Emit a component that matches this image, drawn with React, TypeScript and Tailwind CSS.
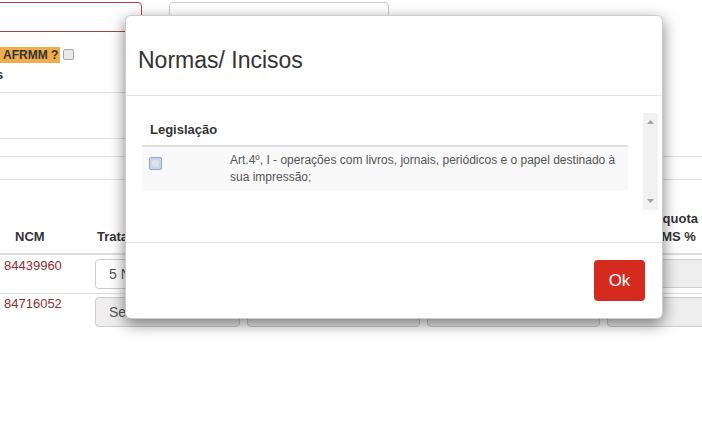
// Página de itens com o modal "Normas/ Incisos" aberto por cima
const CheckboxAzul = () => (
    <div className="h-[13px] w-[13px] rounded-[2px] border border-[#8ea6dc] bg-[#c9d5ee] p-[2px]">
        <div className="h-full w-full rounded-[3px] bg-[#e2e2e2]" />
    </div>
);

const Background = () => (
    <div className="w-[760px]">
        {/* campos do topo */}
        <div className="flex pt-[2px]">
            <div className="ml-[-20px] h-[30px] w-[162px] rounded-[4px] border border-[#a94442] bg-white" />
            <div className="ml-[27px] h-[30px] w-[220px] rounded-[4px] border border-[#ccc] bg-white" />
        </div>
        <div className="mt-[14px] flex h-[17px] items-center">
            <span className="bg-[#f0ad4e] pl-[3px] pr-[2px] text-[12px] font-bold leading-[16px] text-[#333]">AFRMM ?</span>
            <span className="ml-[3px] h-[11px] w-[11px] rounded-[2px] border border-[#a6a6a6] bg-[#e9e9e9]" />
        </div>
        <div className="mt-[3px] h-[17px] leading-[17px] font-bold">
            <span className="ml-[-4px]">s</span>
        </div>
        <div className="h-[10px] w-[560px] border-b border-[#ddd]" />
        <div className="h-[46px] w-[560px] border-b border-[#ddd]" />
        <div className="h-[18px] border-b border-[#ddd]" />
        <div className="h-[23px] border-b border-[#ddd]" />

        {/* tabela de itens */}
        <div className="flex h-[75px] items-end border-b-2 border-[#ddd] pb-[7px] font-bold leading-[18px]">
            <div className="w-[95px] pl-[15px]">NCM</div>
            <div className="w-[152px] pl-[2px]">Tratamento</div>
            <div className="w-[180px]" />
            <div className="w-[180px]" />
            <div className="w-[130px] text-center">
                <div>Alíquota</div>
                <div>ICMS %</div>
            </div>
        </div>
        <div className="flex h-[39px] border-b border-[#ddd]">
            <div className="w-[95px] pl-[4px] pt-[2px] leading-[18px] text-[#8a2f2f]">84439960</div>
            <div className="w-[152px] pt-[4px]">
                <div className="h-[30px] w-[145px] rounded-[4px] border border-[#ccc] bg-white pl-[13px] text-[14px] leading-[28px] text-[#555]">5 Normas</div>
            </div>
            <div className="w-[180px] pt-[4px]">
                <div className="h-[30px] w-[173px] rounded-[4px] border border-[#ccc] bg-white" />
            </div>
            <div className="w-[180px] pt-[4px]">
                <div className="h-[30px] w-[173px] rounded-[4px] border border-[#ccc] bg-white" />
            </div>
            <div className="pt-[4px]">
                <div className="h-[29px] w-[140px] rounded-[4px] border border-[#ccc] bg-[#eee]" />
            </div>
        </div>
        <div className="flex h-[40px]">
            <div className="w-[95px] pl-[4px] pt-[1px] leading-[18px] text-[#8a2f2f]">84716052</div>
            <div className="w-[152px] pt-[3px]">
                <div className="h-[30px] w-[145px] rounded-[4px] border border-[#ccc] bg-[#eee] pl-[13px] text-[14px] leading-[28px] text-[#555]">
                    Selecione
                </div>
            </div>
            <div className="w-[180px] pt-[3px]">
                <div className="h-[30px] w-[173px] rounded-[4px] border border-[#ccc] bg-[#eee]" />
            </div>
            <div className="w-[180px] pt-[3px]">
                <div className="h-[30px] w-[173px] rounded-[4px] border border-[#ccc] bg-[#eee]" />
            </div>
            <div className="pt-[3px]">
                <div className="h-[30px] w-[140px] rounded-[4px] border border-[#ccc] bg-[#eee]" />
            </div>
        </div>
    </div>
);

const NormasModal = () => (
    <div className="absolute left-[125px] top-[15px] flex h-[304px] w-[538px] flex-col rounded-[6px] border border-[rgba(0,0,0,0.2)] bg-white shadow-[0_5px_15px_rgba(0,0,0,0.5)]">
        <div className="h-[80px] border-b border-[#e5e5e5] pl-[12px] pt-[31px]">
            <h4 className="text-[23px] leading-[26px] text-[#333]">Normas/ Incisos</h4>
        </div>

        <div className="h-[146px] pl-[16px] pt-[17px]">
            <div className="flex h-[97px] w-[516px]">
                <div className="w-[486px]">
                    <div className="h-[34px] border-b-2 border-[#ddd] pl-[8px] pt-[8px] font-bold leading-[18px] text-[#333]">
                        Legislação
                    </div>
                    <div className="flex bg-[#f9f9f9] py-[5px]">
                        <div className="w-[83px] pl-[7px] pt-[5px]">
                            <CheckboxAzul />
                        </div>
                        <div className="flex-1 pl-[5px] pr-[6px] text-[12px] leading-[17px] text-[#555]">
                            Art.4º, I - operações com livros, jornais, periódicos e o papel destinado à sua impressão;
                        </div>
                    </div>
                </div>
                {/* barra de rolagem */}
                <div className="ml-auto flex w-[15px] flex-col items-center justify-between bg-[#f1f1f1] py-[7px]">
                    <svg width="7" height="4" viewBox="0 0 7 4">
                        <path d="M0 4 L3.5 0 L7 4 Z" fill="#a3a3a3" />
                    </svg>
                    <svg width="7" height="4" viewBox="0 0 7 4">
                        <path d="M0 0 L3.5 4 L7 0 Z" fill="#a3a3a3" />
                    </svg>
                </div>
            </div>
        </div>

        <div className="flex flex-1 justify-end border-t border-[#e5e5e5] pr-[17px] pt-[17px]">
            <button className="h-[41px] w-[51px] rounded-[4px] bg-[#d52a1e] text-[17px] text-white">Ok</button>
        </div>
    </div>
);

export default function App() {
    return (
        <div className="relative h-[438px] w-[702px] overflow-hidden bg-white font-['Liberation_Sans',Arial,sans-serif] text-[13px] text-[#333]">
            <Background />
            <NormasModal />
        </div>
    );
}
